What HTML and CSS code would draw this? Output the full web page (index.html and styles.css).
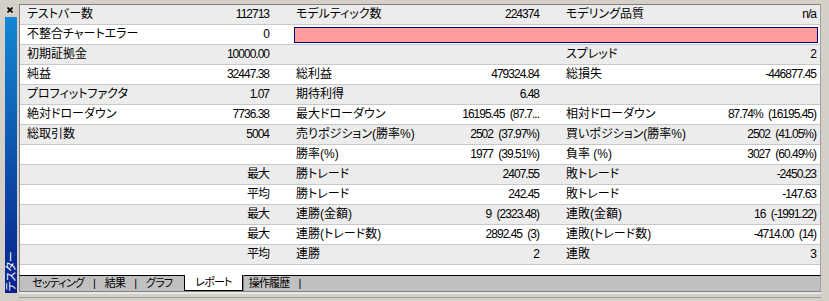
FILE: index.html
```html
<!DOCTYPE html>
<html lang="ja">
<head>
    <meta charset="UTF-8">
    <title>テスター</title>
    <link rel="stylesheet" href="styles.css">
</head>
<body>

<div class="window">
    <div class="side">
        <div class="close">
            <svg width="6" height="6" viewBox="0 0 6 6"><path d="M0.5 0.5L5.5 5.5M5.5 0.5L0.5 5.5" stroke="#000" stroke-width="1.6"/></svg>
        </div>
        <div class="caption"><span>テスター</span></div>
    </div>

    <div class="main">
        <div class="report">
            <div class="row">
                <div class="label">テストバー数</div><div class="value">112713</div>
                <div class="label">モデルティック数</div><div class="value">224374</div>
                <div class="label">モデリング品質</div><div class="value">n/a</div>
            </div>
            <div class="row">
                <div class="label">不整合チャートエラー</div><div class="value">0</div>
                <div class="quality"></div>
            </div>
            <div class="row">
                <div class="label">初期証拠金</div><div class="value">10000.00</div>
                <div></div><div></div>
                <div class="label">スプレッド</div><div class="value">2</div>
            </div>
            <div class="row">
                <div class="label">純益</div><div class="value">32447.38</div>
                <div class="label">総利益</div><div class="value">479324.84</div>
                <div class="label">総損失</div><div class="value">-446877.45</div>
            </div>
            <div class="row">
                <div class="label">プロフィットファクタ</div><div class="value">1.07</div>
                <div class="label">期待利得</div><div class="value">6.48</div>
                <div></div><div></div>
            </div>
            <div class="row">
                <div class="label">絶対ドローダウン</div><div class="value">7736.38</div>
                <div class="label">最大ドローダウン</div><div class="value">16195.45 (87.7...</div>
                <div class="label">相対ドローダウン</div><div class="value">87.74% (16195.45)</div>
            </div>
            <div class="row">
                <div class="label">総取引数</div><div class="value">5004</div>
                <div class="label">売りポジション(勝率%)</div><div class="value">2502 (37.97%)</div>
                <div class="label">買いポジション(勝率%)</div><div class="value">2502 (41.05%)</div>
            </div>
            <div class="row">
                <div></div><div></div>
                <div class="label">勝率(%)</div><div class="value">1977 (39.51%)</div>
                <div class="label">負率 (%)</div><div class="value">3027 (60.49%)</div>
            </div>
            <div class="row">
                <div></div><div class="value">最大</div>
                <div class="label">勝トレード</div><div class="value">2407.55</div>
                <div class="label">敗トレード</div><div class="value">-2450.23</div>
            </div>
            <div class="row">
                <div></div><div class="value">平均</div>
                <div class="label">勝トレード</div><div class="value">242.45</div>
                <div class="label">敗トレード</div><div class="value">-147.63</div>
            </div>
            <div class="row">
                <div></div><div class="value">最大</div>
                <div class="label">連勝(金額)</div><div class="value">9 (2323.48)</div>
                <div class="label">連敗(金額)</div><div class="value">16 (-1991.22)</div>
            </div>
            <div class="row">
                <div></div><div class="value">最大</div>
                <div class="label">連勝(トレード数)</div><div class="value">2892.45 (3)</div>
                <div class="label">連敗(トレード数)</div><div class="value">-4714.00 (14)</div>
            </div>
            <div class="row">
                <div></div><div class="value">平均</div>
                <div class="label">連勝</div><div class="value">2</div>
                <div class="label">連敗</div><div class="value">3</div>
            </div>
            <div class="row"></div>
        </div>

        <div class="tabs">
            <span class="tab first">セッティング</span><span class="sep">|</span>
            <span class="tab">結果</span><span class="sep">|</span>
            <span class="tab">グラフ</span>
            <span class="tab active">レポート</span>
            <span class="tab">操作履歴</span><span class="sep">|</span>
        </div>
        <div class="foot"></div>
    </div>
</div>

</body>
</html>
```

FILE: styles.css
```css
body {
    margin: 0;
    background-color: #d4d0c8;
    font-family: "Liberation Sans", "Noto Sans CJK JP", sans-serif;
    font-size: 12px;
    font-feature-settings: "palt";
    color: #000;
}

.window {
    display: flex;
    height: 301px;
    overflow: hidden;
}

/* left caption strip */
.side {
    width: 19px;
    display: flex;
    flex-direction: column;
}

.close {
    height: 17px;
    padding: 7px 0 0 7px;
    box-sizing: border-box;
    line-height: 0;
}

.caption {
    flex: 1;
    margin: 0 2px 8px 5px;
    background: linear-gradient(#1386d4, #08208c);
    display: flex;
    align-items: flex-end;
    justify-content: center;
}

.caption span {
    writing-mode: vertical-rl;
    text-orientation: sideways;
    transform: rotate(180deg);
    color: #fff;
    font-size: 11px;
    line-height: 12px;
    margin-bottom: 2px;
}

/* report */
.main {
    flex: 1;
    display: flex;
    flex-direction: column;
    margin: 4px 8px 0 0;
}

.report {
    height: 270px;
    overflow: hidden;
    background-color: #fff;
    border-top: 1px solid #808080;
    border-left: 1px solid #808080;
    border-right: 1px solid #a0a0a0;
}

.row {
    display: grid;
    grid-template-columns: 130px 123px 187px 83px 157px 120px;
    height: 19px;
    line-height: 19px;
    border-bottom: 1px solid #c8c8c8;
    white-space: nowrap;
}

.row:nth-child(odd) {
    background-color: #ececec;
}

.label {
    padding-left: 23px;
    overflow: hidden;
}

.row > .label:first-child {
    padding-left: 7px;
}

.value {
    text-align: right;
    padding-right: 4px;
    letter-spacing: -1px;
    word-spacing: 3px;
    overflow: hidden;
}

.quality {
    grid-column: 3 / 7;
    margin: 2px 2px 0 21px;
    height: 16px;
    box-sizing: border-box;
    border: 1px solid #000080;
    background-color: #ff9c9c;
}

/* tabs */
.tabs {
    height: 15px;
    line-height: 15px;
    display: flex;
    border-top: 1px solid #000;
    border-left: 1px solid #808080;
    border-right: 1px solid #a0a0a0;
    background-color: #c0c0c0;
    font-size: 11px;
    white-space: nowrap;
}

.tab {
    padding: 0 9px;
    letter-spacing: -0.8px;
}

.tab.first {
    padding-left: 12px;
}

.tab.active {
    margin: -1px 0 0 3px;
    padding: 0 10px;
    background-color: #fff;
    border-left: 1px solid #000;
    border-right: 1px solid #000;
    border-bottom: 1px solid #000;
    box-shadow: 1px 0 0 #808080;
}

.tab.active + .tab {
    padding-left: 6px;
}

.foot {
    flex: 1;
    border-top: 1px solid #808080;
    box-shadow: inset 0 2px 0 #e8e8e8, inset 0 5px 0 #d4d0c8, inset 0 6px 0 #a0a0a0;
}
```
